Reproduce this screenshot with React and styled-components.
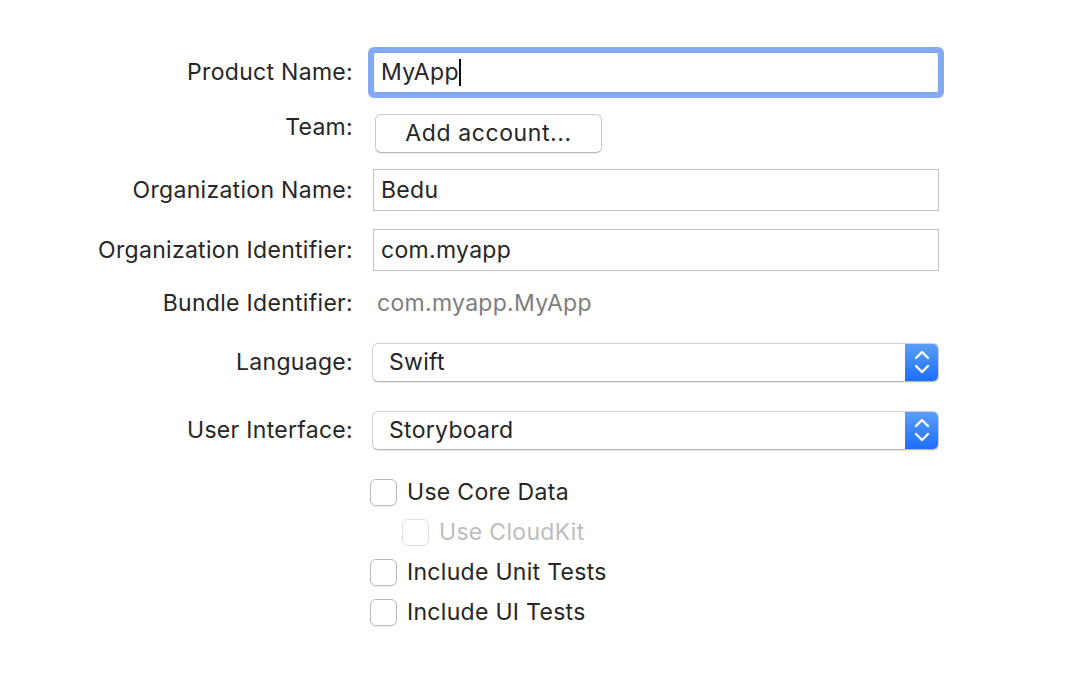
import React from "react";
import styled, { createGlobalStyle } from "styled-components";

const Global = createGlobalStyle`
  html, body { margin: 0; padding: 0; background: #ffffff; }
  body { font-family: Inter, "Noto Sans", sans-serif; color: #262626; }
`;

const Page = styled.div`
  width: 1086px;
  height: 698px;
  padding-top: 42px;
  box-sizing: border-box;
  background: #fff;
  font-size: 23px;
  letter-spacing: 0.3px;
`;

const Form = styled.div`
  display: grid;
  grid-template-columns: 353px 566px;
  column-gap: 20px;
`;

const Label = styled.div`
  text-align: right;
  color: #262626;
  height: ${(p) => p.$h}px;
  display: flex;
  align-items: ${(p) => (p.$top ? "flex-start" : "center")};
  justify-content: flex-end;
  padding-top: ${(p) => p.$pt || 0}px;
  box-sizing: border-box;
  white-space: nowrap;
`;

const Cell = styled.div`
  height: ${(p) => p.$h}px;
  display: flex;
  align-items: center;
`;

const TextField = styled.div`
  width: 100%;
  height: ${(p) => p.$fh}px;
  box-sizing: border-box;
  border: 1px solid ${(p) => (p.$focused ? "#79a3ee" : "#c3c3c3")};
  background: #fff;
  padding-left: 7px;
  display: flex;
  align-items: center;
  color: #262626;
  ${(p) => p.$focused && `box-shadow: 0 0 0 5px #84aaf1; border-radius: 2px;`}
`;

const Caret = styled.span`
  display: inline-block;
  width: 2px;
  height: 27px;
  background: #111;
`;

const PushButton = styled.div`
  margin-left: 2px;
  width: 227px;
  height: 39px;
  box-sizing: border-box;
  border: 1px solid #cbcbcb;
  border-bottom-color: #b8b8b8;
  border-radius: 6px;
  background: #fff;
  box-shadow: 0 1px 1px rgba(0, 0, 0, 0.08);
  display: flex;
  align-items: center;
  justify-content: center;
  letter-spacing: 0.6px;
`;

const Static = styled.div`
  padding-left: 4px;
  color: #7d7d7d;
`;

const Popup = styled.div`
  margin-left: -1px;
  width: 567px;
  height: 39px;
  box-sizing: border-box;
  border: 1px solid #d0d0d0;
  border-bottom-color: #b5b5b5;
  border-radius: 6px;
  background: #fff;
  box-shadow: 0 1px 1px rgba(0, 0, 0, 0.08);
  display: flex;
  align-items: stretch;
  overflow: hidden;
`;

const PopupText = styled.div`
  flex: 1;
  display: flex;
  align-items: center;
  padding-left: 16px;
`;

const Stepper = styled.div`
  width: 33px;
  background: linear-gradient(#5b9df9, #1b6ff9);
  display: flex;
  align-items: center;
  justify-content: center;
`;

const CheckList = styled.div`
  grid-column: 2;
  padding-top: 14px;
  display: flex;
  flex-direction: column;
`;

const CheckRow = styled.div`
  height: 40px;
  display: flex;
  align-items: center;
  padding-left: ${(p) => (p.$indent ? 32 : 0)}px;
  margin-left: -3px;
  color: ${(p) => (p.$disabled ? "#bdbdbd" : "#262626")};
`;

const Box = styled.span`
  width: 27px;
  height: 27px;
  box-sizing: border-box;
  border: 1px solid ${(p) => (p.$disabled ? "#e0e0e0" : "#b9b9b9")};
  border-radius: 6px;
  background: #fff;
  box-shadow: ${(p) => (p.$disabled ? "none" : "0 1px 1px rgba(0,0,0,0.06)")};
  margin-right: 10px;
`;

const Chevrons = () => (
  <svg width="16" height="28" viewBox="0 0 16 28" fill="none" stroke="#fff" strokeWidth="2.4" strokeLinecap="round" strokeLinejoin="round">
    <polyline points="2,10 8,4 14,10" />
    <polyline points="2,18 8,24 14,18" />
  </svg>
);

function Check({ children, indent, disabled }) {
  return (
    <CheckRow $indent={indent} $disabled={disabled}>
      <Box $disabled={disabled} />
      {children}
    </CheckRow>
  );
}

export default function App() {
  return (
    <Page>
      <Global />
      <Form>
        <Label $h={60}>Product Name:</Label>
        <Cell $h={60}>
          <TextField $fh={41} $focused>
            MyApp<Caret />
          </TextField>
        </Cell>

        <Label $h={62} $top $pt={11}>Team:</Label>
        <Cell $h={62}>
          <PushButton>Add account...</PushButton>
        </Cell>

        <Label $h={52}>Organization Name:</Label>
        <Cell $h={52}>
          <TextField $fh={42}>Bedu</TextField>
        </Cell>

        <Label $h={68}>Organization Identifier:</Label>
        <Cell $h={68}>
          <TextField $fh={42}>com.myapp</TextField>
        </Cell>

        <Label $h={38}>Bundle Identifier:</Label>
        <Cell $h={38}>
          <Static>com.myapp.MyApp</Static>
        </Cell>

        <Label $h={80}>Language:</Label>
        <Cell $h={80}>
          <Popup>
            <PopupText>Swift</PopupText>
            <Stepper><Chevrons /></Stepper>
          </Popup>
        </Cell>

        <Label $h={56}>User Interface:</Label>
        <Cell $h={56}>
          <Popup>
            <PopupText>Storyboard</PopupText>
            <Stepper><Chevrons /></Stepper>
          </Popup>
        </Cell>

        <CheckList>
          <Check>Use Core Data</Check>
          <Check indent disabled>Use CloudKit</Check>
          <Check>Include Unit Tests</Check>
          <Check>Include UI Tests</Check>
        </CheckList>
      </Form>
    </Page>
  );
}
